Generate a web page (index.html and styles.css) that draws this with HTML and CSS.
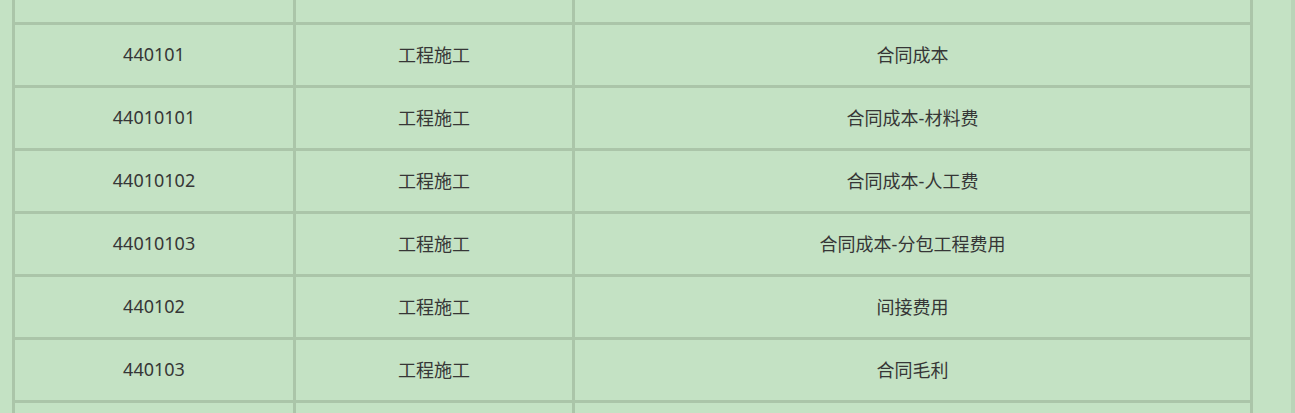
FILE: index.html
```html
<!DOCTYPE html>
<html lang="zh-CN">
<head>
    <meta charset="UTF-8" />
    <title>会计科目</title>
    <link rel="stylesheet" href="styles.css">
</head>
<body>
<div class="page">
    <table class="subjects">
        <tbody>
        <tr class="edge-row"><td></td><td></td><td></td></tr>
        <tr><td>440101</td><td>工程施工</td><td>合同成本</td></tr>
        <tr><td>44010101</td><td>工程施工</td><td>合同成本-材料费</td></tr>
        <tr><td>44010102</td><td>工程施工</td><td>合同成本-人工费</td></tr>
        <tr><td>44010103</td><td>工程施工</td><td>合同成本-分包工程费用</td></tr>
        <tr><td>440102</td><td>工程施工</td><td>间接费用</td></tr>
        <tr><td>440103</td><td>工程施工</td><td>合同毛利</td></tr>
        <tr class="edge-row"><td></td><td></td><td></td></tr>
        </tbody>
    </table>
</div>
</body>
</html>
```

FILE: styles.css
```css
:root {
    --bg-color: #c4e2c4;
    --line-color: #abc5a9;
    --text-color: #363636;
}

html, body {
    margin: 0;
    padding: 0;
}

body {
    font-family: "Noto Sans", "Noto Sans CJK SC", sans-serif;
    background-color: var(--bg-color);
}

.page {
    height: 413px;
    overflow: hidden;
    padding-left: 12px;
    border-right: 4px solid #b9d4b8;
    background-color: var(--bg-color);
}

.subjects {
    margin-top: -41px;
    border-collapse: separate;
    border-spacing: 3px;
    background-color: var(--line-color);
    table-layout: fixed;
}

.subjects td {
    background-color: var(--bg-color);
    height: 58px;
    padding: 0 0 2px;
    text-align: center;
    vertical-align: middle;
    font-size: 18px;
    color: var(--text-color);
}

.subjects td:nth-child(1) {
    width: 278px;
}

.subjects td:nth-child(2) {
    width: 276px;
}

.subjects td:nth-child(3) {
    width: 675px;
}
```
